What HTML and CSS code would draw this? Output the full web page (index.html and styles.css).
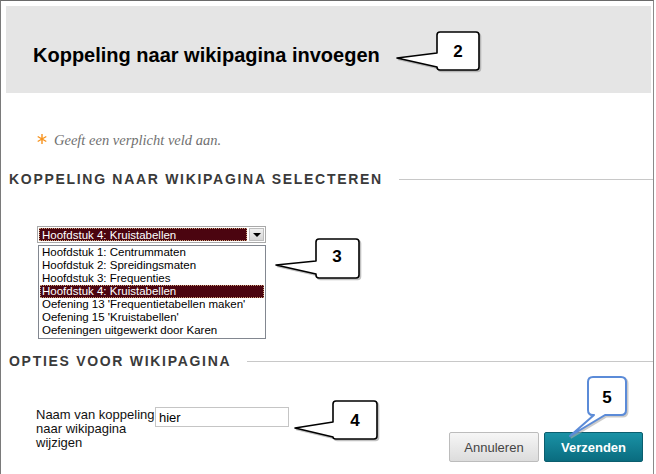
FILE: index.html
```html
<!DOCTYPE html>
<html lang="nl">
<head>
  <meta charset="UTF-8">
  <meta name="viewport" content="width=device-width, initial-scale=1.0">
  <title>Koppeling naar wikipagina invoegen</title>
  <link rel="stylesheet" href="styles.css">
</head>
<body>
  <div class="frame">
    <div class="header">
      <h1>Koppeling naar wikipagina invoegen</h1>
    </div>

    <p class="note">
      <svg class="req" width="12" height="12" viewBox="0 0 12 12">
        <path d="M6 1V11M1.7 3.5L10.3 8.5M1.7 8.5L10.3 3.5" stroke="#f7931e" stroke-width="1.4" fill="none"/>
      </svg>
      <span>Geeft een verplicht veld aan.</span>
    </p>

    <div class="section">
      <h2>Koppeling naar wikipagina selecteren</h2>
      <span class="rule"></span>
    </div>

    <div class="picker">
      <div class="select">
        <span class="select-value">Hoofdstuk 4: Kruistabellen</span>
        <span class="select-btn"><span class="arrow"></span></span>
      </div>
      <ul class="options">
        <li>Hoofdstuk 1: Centrummaten</li>
        <li>Hoofdstuk 2: Spreidingsmaten</li>
        <li>Hoofdstuk 3: Frequenties</li>
        <li class="active">Hoofdstuk 4: Kruistabellen</li>
        <li>Oefening 13 'Frequentietabellen maken'</li>
        <li>Oefening 15 'Kruistabellen'</li>
        <li>Oefeningen uitgewerkt door Karen</li>
      </ul>
    </div>

    <div class="section section-opts">
      <h2>Opties voor wikipagina</h2>
      <span class="rule"></span>
    </div>

    <div class="form-row">
      <label class="field-label" for="linkName">Naam van koppeling naar wikipagina wijzigen</label>
      <input id="linkName" class="field-input" type="text" value="hier">
      <div class="actions">
        <button class="btn btn-cancel">Annuleren</button>
        <button class="btn btn-submit">Verzenden</button>
      </div>
    </div>

    <!-- genummerde uitleg-ballonnen over het venster -->
    <svg class="callouts" width="656" height="474" viewBox="0 0 656 474">
      <g class="bubble">
        <path class="shade" d="M440 32H476Q479 32 479 35V67Q479 70 476 70H440Q437 70 437 67L397 58L437 53V35Q437 32 440 32Z" transform="translate(1.5 1.5)"/>
        <path d="M440 32H476Q479 32 479 35V67Q479 70 476 70H440Q437 70 437 67L397 58L437 53V35Q437 32 440 32Z"/>
        <text x="458" y="57">2</text>
      </g>
      <g class="bubble">
        <path class="shade" d="M319 239H356Q359 239 359 242V275Q359 278 356 278H319Q316 278 316 275V274L276 265L316 261V242Q316 239 319 239Z" transform="translate(1.5 1.5)"/>
        <path d="M319 239H356Q359 239 359 242V275Q359 278 356 278H319Q316 278 316 275V274L276 265L316 261V242Q316 239 319 239Z"/>
        <text x="337" y="262">3</text>
      </g>
      <g class="bubble">
        <path class="shade" d="M336 401H374Q377 401 377 404V436Q377 439 374 439H336Q333 439 333 437L295 428L333 422V404Q333 401 336 401Z" transform="translate(1.5 1.5)"/>
        <path d="M336 401H374Q377 401 377 404V436Q377 439 374 439H336Q333 439 333 437L295 428L333 422V404Q333 401 336 401Z"/>
        <text x="355" y="426">4</text>
      </g>
      <g class="bubble bubble-blue">
        <path class="shade" d="M593 377H621Q626 377 626 382V410Q626 415 621 415H605L570 436L594 415H593Q588 415 588 410V382Q588 377 593 377Z" transform="translate(1.5 1.5)"/>
        <path d="M593 377H621Q626 377 626 382V410Q626 415 621 415H605L570 436L594 415H593Q588 415 588 410V382Q588 377 593 377Z"/>
        <text x="607" y="403">5</text>
      </g>
    </svg>
  </div>
</body>
</html>
```

FILE: styles.css
```css
body {
  margin: 0;
  padding: 0;
  background: #fff;
  font-family: "Liberation Sans", Arial, sans-serif;
  color: #000;
}

.frame {
  position: relative;
  width: 654px;
  height: 474px;
  box-sizing: border-box;
  border-top: 1px solid #6a6a6a;
  border-left: 1px solid #7a7a7a;
  border-right: 1px solid #8a8a8a;
  overflow: hidden;
}

.header {
  margin: 5px 2px 0 5px;
  height: 87px;
  background: #e5e5e5;
  box-sizing: border-box;
  padding: 37px 0 0 27px;
}

h1 {
  margin: 0;
  font-size: 20px;
  line-height: 24px;
  font-weight: bold;
  color: #000;
}

.note {
  margin: 37px 0 0 35px;
  height: 20px;
  display: flex;
  align-items: flex-start;
  font-family: "Liberation Serif", "Times New Roman", serif;
  font-style: italic;
  font-size: 14.5px;
  line-height: 20px;
  color: #707070;
}

.req {
  margin: 3px 6px 0 0;
}

.section {
  display: flex;
  align-items: center;
  padding-left: 8px;
  margin-top: 21px;
}

.section h2 {
  margin: 0;
  font-size: 14px;
  line-height: 16px;
  font-weight: bold;
  letter-spacing: 1.7px;
  text-transform: uppercase;
  color: #3a3a3a;
  white-space: nowrap;
}

.rule {
  flex: 1;
  height: 1px;
  margin-left: 16px;
  background: #c8c8c8;
}

.section-opts {
  margin-top: 14px;
}

.picker {
  margin: 39px 0 0 36px;
  width: 229px;
  font-size: 11.5px;
}

.select {
  display: flex;
  height: 17px;
  box-sizing: border-box;
  border: 1px solid #a9a9a9;
  padding: 1px;
}

.select-value {
  flex: 1;
  background: #4b0510;
  color: #fff;
  line-height: 13px;
  padding-left: 2px;
  border: 1px dotted #c9a07a;
}

.select-btn {
  width: 15px;
  margin-left: 2px;
  background: linear-gradient(#f0f0f0, #d6d6d6);
  border: 1px solid #bdbdbd;
  box-sizing: border-box;
  display: flex;
  align-items: center;
  justify-content: center;
}

.arrow {
  width: 0;
  height: 0;
  border-left: 4px solid transparent;
  border-right: 4px solid transparent;
  border-top: 4px solid #000;
}

.options {
  list-style: none;
  margin: 2px 0 0 1px;
  padding: 0;
  width: 228px;
  box-sizing: border-box;
  border: 1px solid #828790;
  padding: 0 1px 1px 1px;
}

.options li {
  height: 13px;
  line-height: 13px;
  padding-left: 2px;
  white-space: nowrap;
}

.options li.active {
  background: #4b0510;
  color: #fff;
  outline: 1px dotted #c9a07a;
  outline-offset: -1px;
}

.form-row {
  display: flex;
  align-items: flex-start;
  margin-top: 39px;
  padding: 0 10px 0 35px;
}

.field-label {
  width: 119px;
  font-size: 13px;
  line-height: 14px;
  color: #111;
}

.field-input {
  width: 134px;
  height: 20px;
  box-sizing: border-box;
  margin: -1px 0 0 0;
  padding: 0 3px;
  border: 1px solid #c5c5c5;
  font-family: "Liberation Sans", Arial, sans-serif;
  font-size: 13px;
  color: #000;
}

.actions {
  display: flex;
  margin-left: auto;
  margin-top: 24px;
}

.btn {
  height: 30px;
  box-sizing: border-box;
  border-radius: 2px;
  font-family: "Liberation Sans", Arial, sans-serif;
  font-size: 13px;
  cursor: pointer;
  padding: 0;
}

.btn-cancel {
  width: 90px;
  background: linear-gradient(#f6f6f6, #dcdcdc);
  border: 1px solid #bcbcbc;
  color: #444;
}

.btn-submit {
  width: 99px;
  margin-left: 5px;
  background: linear-gradient(#1a92a6, #0a6c7f);
  border: 1px solid #0b5e6e;
  color: #fff;
  font-weight: bold;
}

.callouts {
  position: absolute;
  top: -1px;
  left: -1px;
  pointer-events: none;
}

.bubble path {
  fill: #fff;
  stroke: #000;
  stroke-width: 1.6;
  stroke-linejoin: round;
}

.bubble path.shade {
  fill: #999;
  stroke: #999;
  opacity: 0.6;
}

.bubble text {
  font-family: "Liberation Sans", Arial, sans-serif;
  font-weight: bold;
  font-size: 17px;
  text-anchor: middle;
  fill: #000;
}

.bubble-blue path {
  stroke: #5b8bd8;
  stroke-width: 2;
}

.bubble-blue path.shade {
  stroke: #aaa;
}
```
